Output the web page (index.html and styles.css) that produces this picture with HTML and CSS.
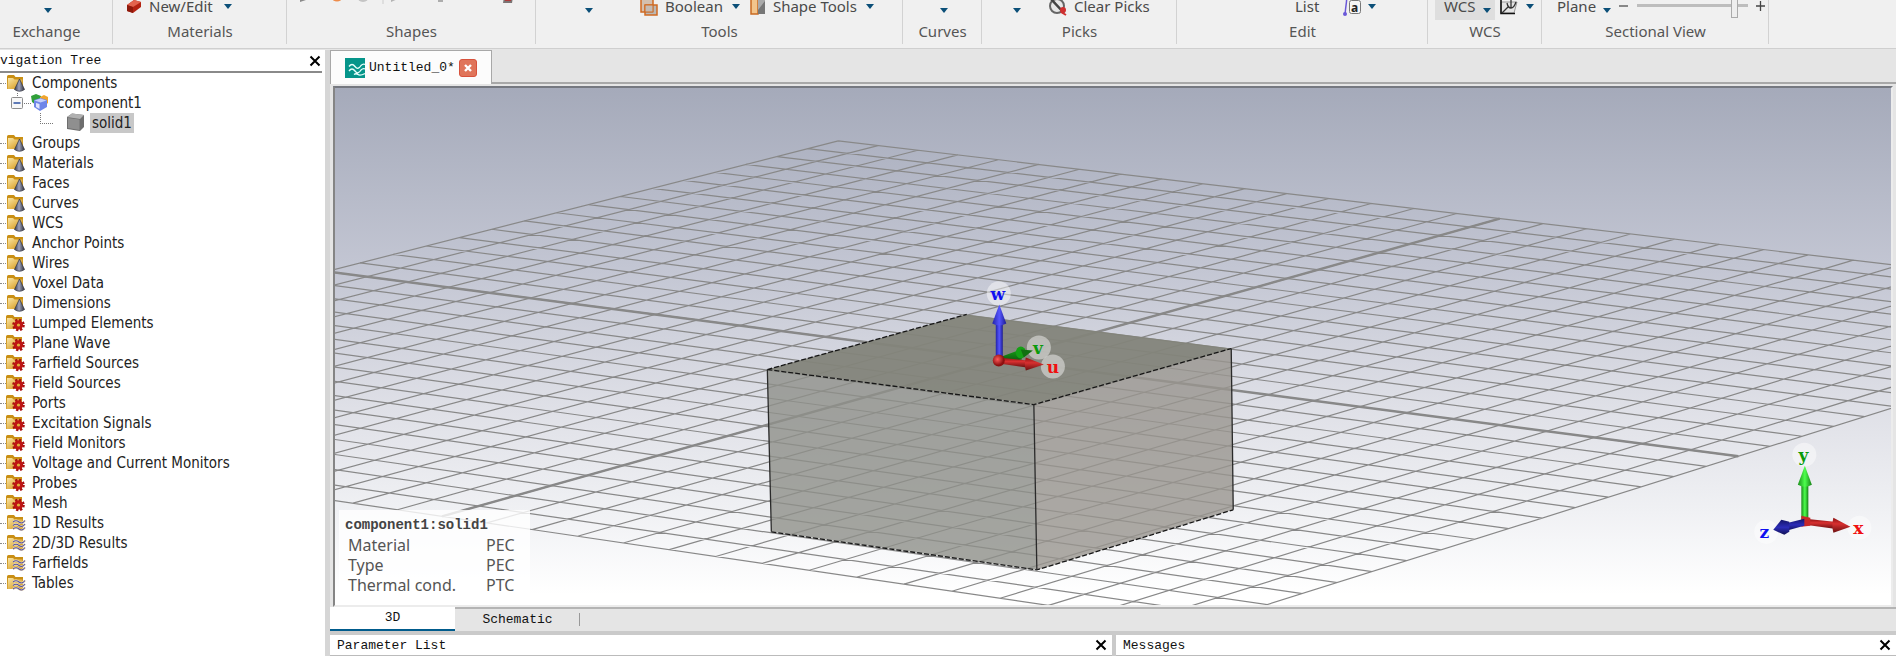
FILE: index.html
```html
<!DOCTYPE html>
<html lang="en">
<head>
<meta charset="utf-8">
<title>Untitled_0*</title>
<link rel="stylesheet" href="styles.css">
</head>
<body>
<svg class="defs" aria-hidden="true">
  <defs>
    <linearGradient id="gold" x1="0" y1="0" x2="1" y2="1"><stop offset="0" stop-color="#fbe7a6"/><stop offset="1" stop-color="#d08f0c"/></linearGradient>
    <linearGradient id="cone" x1="0" y1="0" x2="1" y2="0"><stop offset="0" stop-color="#34364a"/><stop offset=".45" stop-color="#9ea3bd"/><stop offset="1" stop-color="#2c2e3a"/></linearGradient>
    <symbol id="folder" viewBox="0 0 20 18">
      <path d="M1 2.5Q1 1 2.500 1H8l1.500 2H17v12H1z" fill="#c98f14"/>
      <path d="M2 4h5l1.500 1.500H16.500V15H1.500z" fill="url(#gold)"/>
    </symbol>
    <symbol id="f-cone" viewBox="0 0 20 18">
      <use href="#folder" width="20" height="18"/>
      <path d="M13.500 5L18.500 15.500Q13.500 19 8.500 15.500z" fill="url(#cone)" stroke="#3a3c48" stroke-width=".8"/>
    </symbol>
    <symbol id="f-gear" viewBox="0 0 20 18">
      <use href="#folder" x="-1" width="20" height="18"/>
      <circle cx="12.500" cy="11" r="4.700" fill="#bf1414"/>
      <circle cx="12.500" cy="11" r="5.300" fill="none" stroke="#a80f0f" stroke-width="2" stroke-dasharray="2.300 1.860"/>
      <circle cx="12.500" cy="11" r="1.600" fill="#e0b13c"/>
    </symbol>
    <symbol id="f-wave" viewBox="0 0 20 18">
      <use href="#folder" width="20" height="18"/>
      <path d="M7 8q3-2.500 6 0t6-1.500M7 11.500q3-2.500 6 0t6-1.500M7 15q3-2.500 6 0t6-1.500" fill="none" stroke="#f3e3b8" stroke-width="2.200"/>
      <path d="M7 8q3-2.500 6 0t6-1.500M7 11.500q3-2.500 6 0t6-1.500M7 15q3-2.500 6 0t6-1.500" fill="none" stroke="#5a549c" stroke-width="1.100"/>
    </symbol>
    <symbol id="x" viewBox="0 0 12 12"><path d="M1.500 1.500l9 9M10.500 1.500l-9 9" stroke="#000" stroke-width="2"/></symbol>
  </defs>
</svg>

<header class="ribbon">
  <section class="group exchange">
    <div class="tools"><button class="drop low" aria-label="Exchange menu"></button></div>
    <h2>Exchange</h2>
  </section>
  <section class="group materials">
    <div class="tools">
      <button class="tool"><svg width="16" height="18" viewBox="0 0 16 18"><path d="M1 8l7-5 7 2v5l-8 6-6-2z" fill="#b32312"/><path d="M1 8l7-5 7 2-8 5z" fill="#e2644e"/><path d="M1 8l6 2v6l-6-2z" fill="#8e1a0c"/></svg>New/Edit</button>
      <button class="drop" aria-label="New/Edit menu"></button>
    </div>
    <h2>Materials</h2>
  </section>
  <section class="group shapes">
    <div class="tools">
      <svg width="216" height="30" viewBox="0 0 216 30">
        <path d="M1 6v5l9-3z" fill="#8a8a8a"/><ellipse cx="38" cy="7" rx="5" ry="3.500" fill="#ee8c4a"/><circle cx="64" cy="5" r="6" fill="#c4c4c4"/>
        <path d="M84 0v13" stroke="#ccc"/><path d="M92 5v6l9-4z" fill="#b4b4b4"/><path d="M134 6h14v3h-4v2h-5V9h-5z" fill="#adadad"/>
        <path d="M205 6h9l-1 6h-9z" fill="#7c7474"/><path d="M206 6h6v4h-6z" fill="#ae3a3a"/>
      </svg>
    </div>
    <h2>Shapes</h2>
  </section>
  <section class="group tools-group">
    <div class="tools">
      <button class="drop low" aria-label="Transform menu"></button>
      <button class="tool boolean"><svg width="18" height="24" viewBox="0 0 18 24"><path d="M1 5h12v13H1z" fill="#d4bfae" stroke="#cf6a22" stroke-width="1.500"/><path d="M5 11h12v10H5z" fill="#a9a5a2" fill-opacity=".75" stroke="#cf6a22" stroke-width="1.500"/><path d="M5 11h8v7H5z" fill="#c5bbb4" stroke="#cf6a22"/></svg>Boolean</button>
      <button class="drop" aria-label="Boolean menu"></button>
      <button class="tool shape-tools"><svg width="16" height="24" viewBox="0 0 16 24"><path d="M1 4h7v16H1z" fill="#f3c58c" stroke="#c96a20" stroke-width="1.500"/><path d="M8 4h7v16H8z" fill="#777"/><path d="M8 16l7-9V4H8z" fill="#aaa"/></svg>Shape Tools</button>
      <button class="drop" aria-label="Shape Tools menu"></button>
    </div>
    <h2>Tools</h2>
  </section>
  <section class="group curves">
    <div class="tools"><button class="drop low" aria-label="Curves menu"></button></div>
    <h2>Curves</h2>
  </section>
  <section class="group picks">
    <div class="tools">
      <button class="drop low" aria-label="Picks menu"></button>
      <button class="tool clear-picks"><svg width="18" height="24" viewBox="0 0 18 24"><circle cx="8" cy="12" r="7" fill="#e8e8e8" stroke="#666" stroke-width="2"/><path d="M2 5l13 14" stroke="#444" stroke-width="2.500"/><circle cx="14" cy="16" r="3" fill="#d03030"/><path d="M12 18l5 3" stroke="#d03030" stroke-width="2"/></svg>Clear Picks</button>
    </div>
    <h2>Picks</h2>
  </section>
  <section class="group edit">
    <div class="tools">
      <button class="tool">List</button>
      <button class="tool param" aria-label="Parametric update"><svg width="20" height="24" viewBox="0 0 20 24"><path d="M3 20L5 3" stroke="#6a58d8" stroke-width="1.500"/><circle cx="3" cy="20" r="2" fill="#6a58d8"/><rect x="7.500" y="6.500" width="11" height="13" rx="2" fill="#f5f5f5" stroke="#777"/><text x="9" y="18" class="glyph">a</text></svg></button>
      <button class="drop" aria-label="Parametric menu"></button>
    </div>
    <h2>Edit</h2>
  </section>
  <section class="group wcs">
    <div class="tools">
      <button class="tool pressed">WCS<i class="arrow"></i></button>
      <button class="tool" aria-label="Align WCS"><svg width="18" height="24" viewBox="0 0 18 24"><path d="M1 8h16l-3 11H1z" fill="#e4e4e4" stroke="#999"/><path d="M1 5v14.500h14" fill="none" stroke="#111" stroke-width="1.600"/><path d="M2 19l6-6M11 4v10M7 9q1 5 4 5t5-6" fill="none" stroke="#333" stroke-width="1.300"/></svg></button>
      <button class="drop" aria-label="Align WCS menu"></button>
    </div>
    <h2>WCS</h2>
  </section>
  <section class="group section-view">
    <div class="tools">
      <button class="tool">Plane<i class="arrow"></i></button>
      <button class="step" aria-label="Move plane back"><svg width="10" height="10" viewBox="0 0 10 10"><path d="M0 5h9" stroke="#666" stroke-width="1.500"/></svg></button>
      <input class="slider" type="range" min="0" max="100" value="90" aria-label="Plane position">
      <button class="step" aria-label="Move plane forward"><svg width="10" height="10" viewBox="0 0 10 10"><path d="M0 5h9M4.500 0v10" stroke="#444" stroke-width="1.300"/></svg></button>
    </div>
    <h2>Sectional View</h2>
  </section>
</header>

<main class="workspace">
  <aside class="nav">
    <div class="nav-head"><h1>vigation Tree</h1><button class="close" aria-label="Close navigation tree"><svg width="12" height="12"><use href="#x"/></svg></button></div>
    <ul class="tree">
      <li><svg class="ico"><use href="#f-cone"/></svg>Components</li>
      <li class="child"><svg width="51" height="20" viewBox="0 0 51 20"><path d="M17.500 0v5M24 10.500h8" stroke="#777" stroke-dasharray="1 1"/><rect x="11.500" y="4.500" width="11" height="11" rx="1" fill="#f7f7f7" stroke="#8c8c8c"/><path d="M13.500 10h7" stroke="#2c50a0" stroke-width="1.500"/><path d="M31 3l5-2 5 2v6l-5 3-4-3z" fill="#31a03a"/><path d="M40 4l4-2 4 2v6l-4 3-4-3z" fill="#f1a52c"/><path d="M34 7l6.500-2L47 7v7l-7 4-6-4z" fill="#6f86e8"/><path d="M34.500 7.500l6 2 6-2-6-2z" fill="#c5d0fa"/><path d="M36 10v4l3.500 2V11z" fill="#dfe5fd"/></svg>component1</li>
      <li class="leaf"><svg width="86" height="20" viewBox="0 0 86 20"><path d="M40.500 0v10M40 10.500h14" stroke="#777" stroke-dasharray="1 1" fill="none"/><path d="M67 4l5-3.500 12 1.500v12l-4 4-13-2z" fill="#6e6e6e"/><path d="M67 4l5-3.500L84 2l-4 4z" fill="#b0b0b0"/><path d="M68 5l11.500 1.500V17L68 15z" fill="#8f8f8f"/></svg><span class="selected">solid1</span></li>
      <li><svg class="ico"><use href="#f-cone"/></svg>Groups</li>
      <li><svg class="ico"><use href="#f-cone"/></svg>Materials</li>
      <li><svg class="ico"><use href="#f-cone"/></svg>Faces</li>
      <li><svg class="ico"><use href="#f-cone"/></svg>Curves</li>
      <li><svg class="ico"><use href="#f-cone"/></svg>WCS</li>
      <li><svg class="ico"><use href="#f-cone"/></svg>Anchor Points</li>
      <li><svg class="ico"><use href="#f-cone"/></svg>Wires</li>
      <li><svg class="ico"><use href="#f-cone"/></svg>Voxel Data</li>
      <li><svg class="ico"><use href="#f-cone"/></svg>Dimensions</li>
      <li><svg class="ico"><use href="#f-gear"/></svg>Lumped Elements</li>
      <li><svg class="ico"><use href="#f-gear"/></svg>Plane Wave</li>
      <li><svg class="ico"><use href="#f-gear"/></svg>Farfield Sources</li>
      <li><svg class="ico"><use href="#f-gear"/></svg>Field Sources</li>
      <li><svg class="ico"><use href="#f-gear"/></svg>Ports</li>
      <li><svg class="ico"><use href="#f-gear"/></svg>Excitation Signals</li>
      <li><svg class="ico"><use href="#f-gear"/></svg>Field Monitors</li>
      <li><svg class="ico"><use href="#f-gear"/></svg>Voltage and Current Monitors</li>
      <li><svg class="ico"><use href="#f-gear"/></svg>Probes</li>
      <li><svg class="ico"><use href="#f-gear"/></svg>Mesh</li>
      <li><svg class="ico"><use href="#f-wave"/></svg>1D Results</li>
      <li><svg class="ico"><use href="#f-wave"/></svg>2D/3D Results</li>
      <li><svg class="ico"><use href="#f-wave"/></svg>Farfields</li>
      <li><svg class="ico"><use href="#f-wave"/></svg>Tables</li>
    </ul>
  </aside>

  <section class="document">
    <div class="doc-tabs">
      <div class="doc-tab">
        <svg width="20" height="20" viewBox="0 0 20 20"><rect width="20" height="20" fill="#05958a"/><path d="M4 8.500q3-4 6 0t6-1q2-2 4-1M4 13q3-4 6 0t6-1q2-2 4-1M9 16.500q2-1.500 4 0t7-1" fill="none" stroke="#e8fffc" stroke-width="1.300"/></svg>
        <span>Untitled_0*</span>
        <button class="tab-close" aria-label="Close tab"><svg width="8" height="8" viewBox="0 0 8 8"><path d="M1 1l6 6M7 1L1 7" stroke="#fff" stroke-width="2.400"/></svg></button>
      </div>
    </div>

    <div class="viewport">
      <svg class="scene" viewBox="335 88 1556 516" preserveAspectRatio="xMidYMid slice">
        <defs>
          <linearGradient id="blueShaft"><stop offset="0" stop-color="#2222a8"/><stop offset=".5" stop-color="#5555ff"/><stop offset="1" stop-color="#1c1c90"/></linearGradient>
          <linearGradient id="greenShaft"><stop offset="0" stop-color="#1a8c1a"/><stop offset=".5" stop-color="#4dff4d"/><stop offset="1" stop-color="#158015"/></linearGradient>
          <linearGradient id="redShaft" x1="0" y1="0" x2="0" y2="1"><stop offset="0" stop-color="#8c1212"/><stop offset=".4" stop-color="#d83030"/><stop offset="1" stop-color="#6a1010"/></linearGradient>
          <linearGradient id="navyShaft" x1="0" y1="0" x2="0" y2="1"><stop offset="0" stop-color="#15156a"/><stop offset=".5" stop-color="#2c2cb8"/><stop offset="1" stop-color="#101052"/></linearGradient>
          <linearGradient id="leafShaft" x1="0" y1="0" x2="0" y2="1"><stop offset="0" stop-color="#18a018"/><stop offset="1" stop-color="#0c500c"/></linearGradient>
          <radialGradient id="ball" cx=".4" cy=".4"><stop offset="0" stop-color="#ff5a5a"/><stop offset="1" stop-color="#8c1010"/></radialGradient>
        </defs>
        <path id="grid" class="grid"/>
        <path id="grid-axes" class="grid-axes"/>
        <path d="M768 369L1034 404 1037 569 772 531z" fill="#8f908a" fill-opacity=".8"/>
        <path d="M1034 404L1231 348 1233 509 1037 569z" fill="#99958f" fill-opacity=".8"/>
        <path d="M768 369L967 314 1231 348 1034 404z" fill="#83847a" fill-opacity=".95"/>
        <path d="M768 369L967 314M768 369L1034 404 1231 348M772 531L1037 569 1233 509" class="edge"/>
        <path d="M768 369L772 531M1034 404L1037 569M1231 348L1233 509" class="edge-v"/>

        <g>
          <circle cx="999" cy="293" r="12" class="halo"/><circle cx="1039" cy="347" r="12" class="halo"/><circle cx="1053" cy="366" r="12" class="halo"/>
          <path d="M1002 356l19-7 1 10-18 3z" fill="url(#leafShaft)"/><ellipse cx="1021" cy="352" rx="5" ry="6" fill="#14a014"/><path d="M1021 349l12 1-9 7z" fill="#117011"/>
          <path d="M996 323h7v36h-7z" fill="url(#blueShaft)"/><path d="M999.500 304l7 19q-7 4-14 0z" fill="url(#blueShaft)"/>
          <path d="M999 357l28 3v7l-28-4z" fill="url(#redShaft)"/><path d="M1026 357l18 7-18 6q-2-6 0-13z" fill="url(#redShaft)"/><circle cx="999" cy="360" r="6" fill="url(#ball)"/>
          <text x="998" y="300" class="axis w">w</text><text x="1038" y="353" class="axis v">v</text><text x="1053" y="372" class="axis u">u</text>
        </g>
        <g>
          <circle cx="1803" cy="454" r="12" class="halo"/><circle cx="1858" cy="527" r="12" class="halo"/><circle cx="1765" cy="531" r="12" class="halo"/>
          <path d="M1800 484h7v36h-7z" fill="url(#greenShaft)"/><path d="M1803.500 465l7 19q-7 4-14 0z" fill="url(#greenShaft)"/>
          <path d="M1804 518l29 3v7l-29-4z" fill="url(#redShaft)"/><path d="M1832 517l17 9-17 6q-2-7 0-15z" fill="url(#redShaft)"/>
          <path d="M1800 515l9 2v8l-9 1z" fill="#c82828"/>
          <path d="M1803 518v7l-18 5-2-7z" fill="url(#navyShaft)"/><path d="M1780 519l8 2v10l-5 3-11-5z" fill="url(#navyShaft)"/>
          <text x="1802" y="460" class="axis v">y</text><text x="1857" y="533" class="axis u">x</text><text x="1763" y="537" class="axis w">z</text>
        </g>
      </svg>
      <div class="info">
        <h3>component1:solid1</h3>
        <table>
          <tr><th>Material</th><td>PEC</td></tr>
          <tr><th>Type</th><td>PEC</td></tr>
          <tr><th>Thermal cond.</th><td>PTC</td></tr>
        </table>
      </div>
    </div>

    <div class="view-tabs">
      <button class="view-tab active">3D</button>
      <button class="view-tab">Schematic</button>
    </div>

    <div class="docks">
      <section class="dock params"><h2>Parameter List</h2><button class="close" aria-label="Close parameter list"><svg width="12" height="12"><use href="#x"/></svg></button></section>
      <section class="dock"><h2>Messages</h2><button class="close" aria-label="Close messages"><svg width="12" height="12"><use href="#x"/></svg></button></section>
    </div>
  </section>
</main>
<script src="grid.js"></script>
</body>
</html>
```

FILE: styles.css
```css
* { box-sizing: border-box; }
body {
  margin: 0;
  height: 100vh;
  display: flex;
  flex-direction: column;
  overflow: hidden;
  background: #e5e5e5;
  color: #1c1c1c;
  font-family: "Noto Sans", "Open Sans", sans-serif;
  font-size: 15px;
}
h1, h2, h3, ul { margin: 0; padding: 0; font-weight: normal; }
button { border: 0; padding: 0; background: none; font: inherit; color: inherit; }
svg { display: block; flex: none; }
.defs { position: absolute; width: 0; height: 0; }

/* Ribbon: the tool row runs off the top of the window */
.ribbon {
  display: flex;
  flex: none;
  margin-top: -9px;
  background: #f0f0f0;
  border-bottom: 1px solid #cfcfcf;
}
.group {
  flex: none;
  height: 57px;
  display: flex;
  flex-direction: column;
  position: relative;
}
.group::after {
  content: "";
  position: absolute;
  right: 0; top: 0; bottom: 4px;
  width: 1px;
  background: #d2d2d2;
}
.group h2 { font-size: 15px; line-height: 20px; text-align: center; color: #555; }
.tools { display: flex; align-items: center; height: 30px; color: #4a4a4a; }
.tool { display: flex; align-items: center; gap: 7px; height: 28px; line-height: 28px; white-space: nowrap; }
.drop { width: 14px; height: 28px; display: flex; align-items: center; justify-content: center; }
.drop::before, .arrow {
  content: "";
  border: 4px solid transparent;
  border-top: 5px solid #0b4f78;
  border-bottom: 0;
}
.low, .arrow { margin-top: 9px; }
.exchange { width: 113px; }
.exchange h2 { padding-right: 20px; }
.exchange .tools { padding-left: 41px; }
.materials { width: 174px; }
.materials .tools { padding-left: 13px; gap: 8px; }
.shapes { width: 249px; }
.shapes .tools { padding-left: 12px; }
.tools-group { width: 367px; }
.tools-group .tools { padding-left: 46px; gap: 6px; }
.boolean { margin-left: 38px; }
.shape-tools { margin-left: 1px; }
.curves { width: 79px; }
.curves .tools { padding-left: 34px; }
.picks { width: 195px; }
.picks .tools { padding-left: 28px; }
.clear-picks { margin-left: 25px; }
.edit { width: 251px; }
.edit .tools { padding-left: 118px; gap: 3px; }
.param { margin-left: 20px; }
.glyph { font: bold 12px "Noto Sans", sans-serif; fill: #222; }
.wcs { width: 114px; }
.wcs .tools { padding-left: 7px; gap: 5px; }
.pressed { padding: 0 4px 0 9px; background: #dedede; width: 60px; }
.section-view { width: 227px; }
.section-view .tools { padding-left: 15px; gap: 8px; }
.slider { appearance: none; width: 111px; height: 24px; margin: 0; background: linear-gradient(#bdbdbd, #bdbdbd) 0 10px / 100% 3px no-repeat; }
.slider::-webkit-slider-thumb { appearance: none; width: 7px; height: 24px; background: #eee; border: 1px solid #aaa; }

/* Workspace */
.workspace { flex: 1; min-height: 0; display: flex; }
.nav { flex: none; width: 330px; background: #fff; border-right: 5px solid #d6d6d6; margin-top: 1px; }
.nav-head {
  display: flex;
  align-items: center;
  justify-content: space-between;
  width: 322px;
  height: 23px;
  border-bottom: 2px solid #8a8a8a;
}
.nav-head h1, .dock h2, .doc-tab, .view-tab { font-family: "Liberation Mono", monospace; font-size: 13px; color: #111; }
.nav-head .close { margin-right: 1px; }
.tree { list-style: none; font-family: "DejaVu Sans Condensed", "DejaVu Sans", sans-serif; font-stretch: condensed; font-size: 15px; color: #222; }
.tree li { display: flex; align-items: center; height: 20px; padding-left: 6px; gap: 6px; white-space: nowrap; position: relative; }
.tree li::before { content: ""; position: absolute; left: 0; top: 10px; width: 6px; border-top: 1px dotted #888; }
.tree .child::before, .tree .leaf::before { display: none; }
.ico { width: 20px; height: 18px; }
.tree .child { padding-left: 0; }
.tree .leaf { padding-left: 0; gap: 4px; }
.selected { background: #c8c8c8; padding: 0 2px; line-height: 20px; }

.document { flex: 1; min-width: 0; display: flex; flex-direction: column; }
.doc-tabs { display: flex; height: 35px; padding-top: 1px; border-bottom: 2px solid #a8a8a8; }
.doc-tab {
  display: flex;
  align-items: center;
  gap: 4px;
  width: 162px;
  margin-bottom: -2px;
  padding-left: 14px;
  background: #fcfcfc;
  border: 1px solid #a8a8a8;
  border-bottom: 0;
}
.tab-close { width: 18px; height: 18px; display: grid; place-items: center; background: #e0755a; border: 1px solid #d8523c; border-radius: 3px; }

.viewport {
  position: relative;
  flex: 1;
  min-height: 0;
  margin: 2px 3px 0 3px;
  border: 2px solid;
  border-color: #757880 #ececec #ececec #858585;
  background: linear-gradient(#a5aaba, #c3c6d3 35%, #dfe0e7 62%, #f0f1f4 82%, #fff 98%);
}
.scene { position: absolute; inset: 0; width: 100%; height: 100%; }
.grid { fill: none; stroke: #888; stroke-width: 1.2px; }
.grid-axes { fill: none; stroke: #888; stroke-width: 2.4px; }
.edge { fill: none; stroke: #161616; stroke-width: 1.3px; stroke-dasharray: 5 2; }
.edge-v { fill: none; stroke: #2a2a2a; stroke-width: 1.3px; }
.halo { fill: #fff; fill-opacity: .45; }
.axis { font: bold 17px "DejaVu Serif", serif; text-anchor: middle; }
.w { fill: #1010f0; }
.v { fill: #0a9a0a; }
.u { fill: #f01010; }

.info { position: absolute; left: 4px; bottom: 6px; width: 191px; padding: 6px 6px 4px; background: rgba(255, 255, 255, .8); color: #555; }
.info h3 { font: bold 14px/19px "Liberation Mono", monospace; color: #444; }
.info table { border-collapse: collapse; font-size: 16px; line-height: 20px; margin-left: 3px; }
.info th { width: 138px; padding: 0; text-align: left; font-weight: normal; }
.info td { padding: 0; }

.view-tabs { display: flex; height: 24px; border-top: 2px solid #b4b4b4; }
.view-tab { width: 125px; position: relative; line-height: 20px; }
.view-tab.active { margin-top: -2px; background: #fff; border-bottom: 2px solid #005b8c; }
.view-tab:last-child::after { content: ""; position: absolute; right: 0; top: 4px; height: 13px; width: 1px; background: #999; }

.docks { display: grid; grid-template-columns: 784fr 782fr; gap: 4px; padding-top: 4px; background: #cacaca; }
.dock { display: flex; align-items: center; justify-content: space-between; height: 21px; padding: 0 5px 0 7px; background: #fff; border-bottom: 1px solid #bbb; }
```

FILE: grid.js
```javascript
// Perspective projection of the 32 x 32 working plane; u and v run from -1 to 1.
function project(u, v) {
  const w = 1 - 0.0474 * u + 0.0533 * v;
  return [
    ((999.3 + 655.6 * u + 579.6 * v) / w).toFixed(1),
    ((359 + 75.0 * u - 129.0 * v) / w).toFixed(1)
  ].join(" ");
}
function line(u1, v1, u2, v2) {
  return "M" + project(u1, v1) + "L" + project(u2, v2);
}
let cells = "";
for (let i = -16; i <= 16; i++) {
  const t = i / 16;
  cells += line(t, -1, t, 1) + line(-1, t, 1, t);
}
document.getElementById("grid").setAttribute("d", cells);
document.getElementById("grid-axes").setAttribute("d", line(0, -1, 0, 1) + line(-1, 0, 1, 0));
```
